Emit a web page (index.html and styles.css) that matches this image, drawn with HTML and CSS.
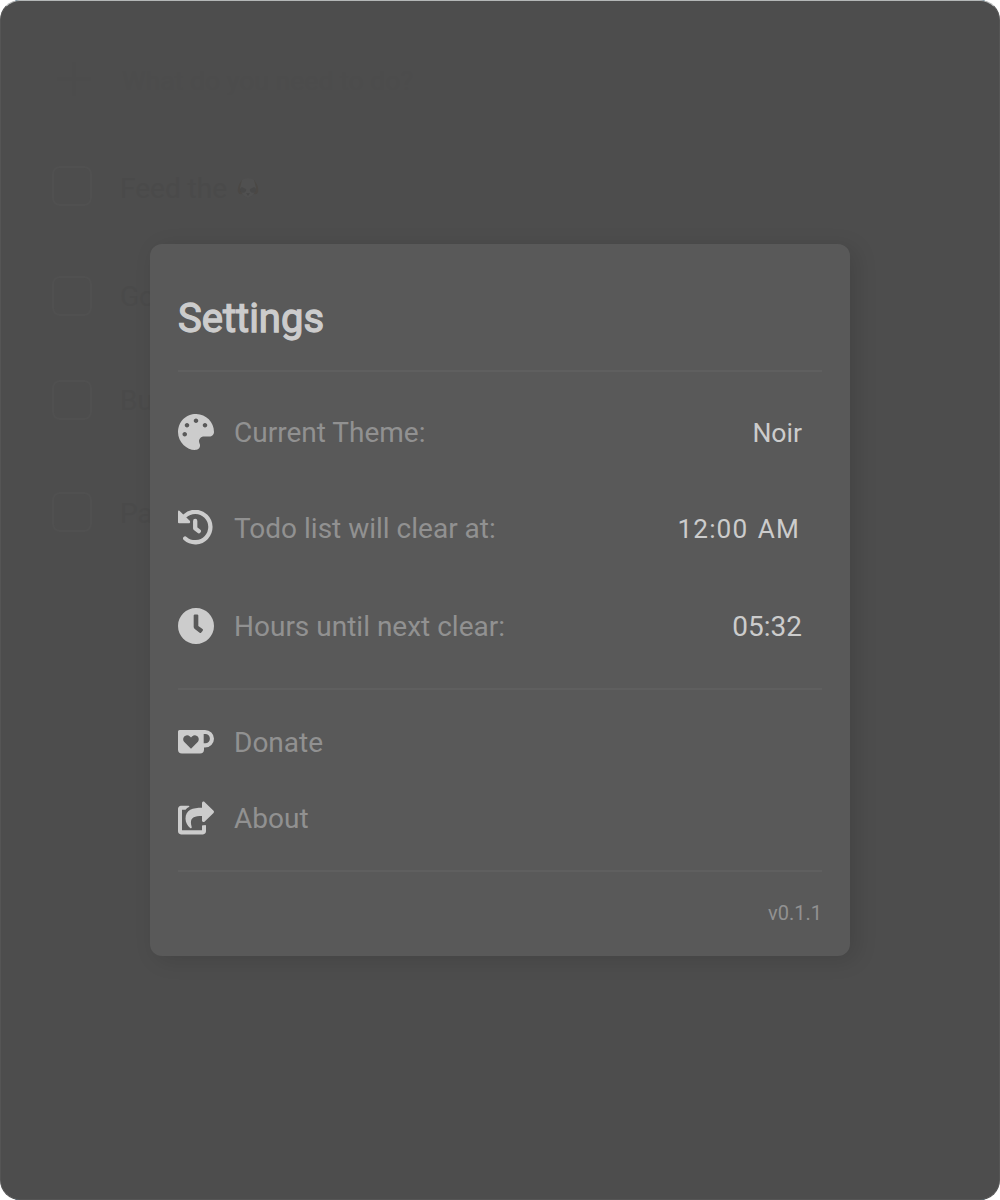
FILE: index.html
```
<!DOCTYPE html>
<html lang="en">
<head>
<meta charset="utf-8">
<title>Settings</title>
<link rel="stylesheet" href="styles.css">
</head>
<body>
<div class="window">
  <main class="todos">
    <div class="todo new"><svg class="plus" viewBox="0 0 40 40"><path d="M5 19h34M22 2v34"/></svg><span class="todo-text">What do you need to do?</span></div>
    <div class="todo first"><span class="check"></span><span class="todo-text">Feed the</span><svg class="dog" viewBox="0 0 22 22"><path class="ears" d="M5 3Q0 9 1 15q2 4 5 1l-1-8zM17 3q5 6 4 12-2 4-5 1l1-8z"/><path class="face" d="M5 3q6-4 12 0l2 8q-1 7-8 10-7-3-8-10z"/><path class="marks" d="M5 10a3 3 0 1 0 4 2zM17 10a3 3 0 1 1-4 2zM9 16h4l-2 3z"/></svg></div>
    <div class="todo second"><span class="check"></span><span class="todo-text">Go</span></div>
    <div class="todo third"><span class="check"></span><span class="todo-text">Bu</span></div>
    <div class="todo fourth"><span class="check"></span><span class="todo-text">Pa</span></div>
  </main>
  <div class="overlay">
    <section class="modal">
      <h1 class="title">Settings</h1>
      <div class="options">
        <div class="row">
          <svg class="icon" viewBox="0 0 512 512"><path d="M204.3 5C104.9 24.4 24.8 104.3 5.2 203.4c-37 187 131.7 326.4 258.8 306.7 41.2-6.4 61.4-54.6 42.5-91.7-23.1-45.4 9.9-98.4 60.9-98.4h79.7c35.8 0 64.8-29.6 64.9-65.3C511.5 97.1 368.1-26.9 204.3 5zM96 320c-17.7 0-32-14.3-32-32s14.3-32 32-32 32 14.3 32 32-14.3 32-32 32zm32-128c-17.7 0-32-14.3-32-32s14.3-32 32-32 32 14.3 32 32-14.3 32-32 32zm128-64c-17.7 0-32-14.3-32-32s14.3-32 32-32 32 14.3 32 32-14.3 32-32 32zm128 64c-17.7 0-32-14.3-32-32s14.3-32 32-32 32 14.3 32 32-14.3 32-32 32z"/></svg>
          <span class="label">Current Theme:</span><span class="value theme">Noir</span>
        </div>
        <div class="row">
          <svg class="icon" viewBox="0 0 36 36"><path d="M1.400.700 12 11q.5 2-.6 2.300H1q-1 0-1-1V1.300Q.2.100 1.400.700z"/><path class="line" d="M6.800 6A15.2 15.2 0 1 1 7.2 28.500M17.200 11V18.300L20.800 21.200"/></svg>
          <span class="label">Todo list will clear at:</span><span class="value time">12:00 AM</span>
        </div>
        <div class="row">
          <svg class="icon" viewBox="8 8 496 496"><path d="M256,8C119,8,8,119,8,256S119,504,256,504,504,393,504,256,393,8,256,8Zm92.49,313h0l-20,25a16,16,0,0,1-22.49,2.5h0l-67-49.72a40,40,0,0,1-15-31.23V112a16,16,0,0,1,16-16h32a16,16,0,0,1,16,16V256l58,42.5A16,16,0,0,1,348.49,321Z"/></svg>
          <span class="label">Hours until next clear:</span><span class="value left">05:32</span>
        </div>
      </div>
      <div class="links">
        <div class="row">
          <svg class="icon" viewBox="0 0 36 36"><path fill-rule="evenodd" d="M1.5 6H27a9 8.800 0 0 1 0 17.600h-1V25.500q0 4-4 4H4q-4 0-4-4V7.500Q0 6 1.500 6zM25.700 10v9.300h1.600a4.600 4.650 0 0 0 0-9.300zM13 24.700 6.300 18C3 14 8 8.800 12 12.400l1 1 1-1C18 8.800 23 14 19.700 18z"/></svg>
          <span class="label">Donate</span>
        </div>
        <div class="row">
          <svg class="icon" viewBox="0 -24 576 560" preserveAspectRatio="none"><path d="M568.482 177.448L424.479 313.433C409.3 327.768 384 317.14 384 295.985v-71.963c-144.575.97-205.566 35.113-164.775 171.353 4.483 14.973-12.846 26.567-25.006 17.33C155.252 383.105 120 326.488 120 269.339c0-143.937 117.599-172.5 264-173.312V24.012c0-21.174 25.317-31.768 40.479-17.448l144.003 135.988c10.02 9.463 10.028 25.425 0 34.896zM384 379.128V448H64V128h50.916a11.99 11.99 0 0 0 8.648-3.693c14.953-15.568 32.237-27.89 51.014-37.676C185.708 80.83 181.584 64 169.033 64H48C21.49 64 0 85.49 0 112v352c0 26.51 21.49 48 48 48h352c26.51 0 48-21.49 48-48v-88.806c0-8.288-8.197-14.066-16.011-11.302a71.83 71.83 0 0 1-34.189 3.377c-7.27-1.046-13.8 4.514-13.8 11.859z"/></svg>
          <span class="label">About</span>
        </div>
      </div>
      <footer class="version">v0.1.1</footer>
    </section>
  </div>
</div>
</body>
</html>
```
FILE: styles.css
```
* { box-sizing: border-box; }
body { margin: 0; background: linear-gradient(90deg, #fff 15px, #5084a4 16px, #e0e5e8 21px, #e0e5e8 979px, #5084a4 984px, #fff 985px); font-family: Roboto, sans-serif; overflow: hidden; }
.window { display: grid; width: 1000px; height: 1200px; border-radius: 20px; background: #4d4d4d; border: 1px solid #555; border-top-color: #b4b7b7; overflow: hidden; }
.todos, .overlay { grid-area: 1 / 1; }
.todos { padding: 31px 51px; color: #4a4a4a; }
.todo { display: flex; align-items: center; height: 108px; gap: 28px; font-size: 28px; }
.new { height: 96px; gap: 30px; font-size: 26.6px; color: #4c4c4c; }
.first { height: 116px; }
.first .todo-text { padding-top: 4px; }
.second { height: 104px; }
.third { height: 104px; }
.fourth { height: 120px; }
.fourth .todo-text { padding-top: 3px; }
.check { width: 40px; height: 40px; border: 2px solid #505050; border-radius: 8px; }
.plus { width: 40px; height: 40px; fill: none; stroke: #4c4c4c; stroke-width: 3; }
.dog { width: 22px; height: 22px; margin-left: -18px; margin-top: 3px; }
.ears { fill: #4b4845; }
.face { fill: #505050; }
.marks { fill: #484848; }
.overlay { display: grid; place-items: center; }
.modal { width: 700px; height: 712px; padding: 0 28px; border-radius: 12px; background: #595959; box-shadow: 6px 4px 22px rgba(0, 0, 0, .12); }
.title { display: flex; align-items: center; height: 126px; margin: 0; padding-top: 23px; color: #ccc; font-size: 40px; font-weight: 400; -webkit-text-stroke: 1.3px #ccc; }
.options, .links, .version { border-top: 2px solid #5f5f5f; }
.options { padding: 12px 0; }
.links { padding: 14px 0; }
.row { display: flex; align-items: center; height: 96px; padding-right: 20px; font-size: 28px; }
.options .row:last-child { height: 100px; }
.links .row { height: 76px; }
.icon { width: 36px; height: 36px; margin-right: 20px; fill: #ccc; }
.line { fill: none; stroke: #ccc; stroke-width: 4.3; stroke-linecap: round; stroke-linejoin: round; }
.label { color: #919191; }
.value { margin-left: auto; color: #ccc; }
.theme { font-size: 26.6px; }
.time { padding: 2px 2px 0 0; font-size: 26.2px; letter-spacing: 1.1px; word-spacing: 2px; }
.version { display: flex; align-items: center; justify-content: flex-end; height: 84px; color: #919191; font-size: 20px; }
```
